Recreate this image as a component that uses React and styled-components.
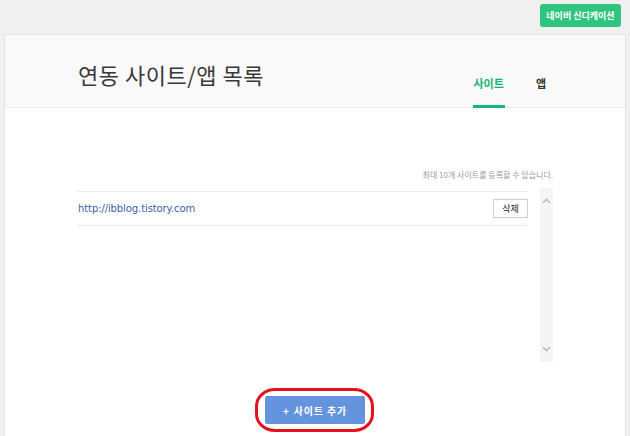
import React from "react";
import styled, { createGlobalStyle } from "styled-components";

const Global = createGlobalStyle`
  html, body { margin: 0; padding: 0; }
  body {
    background: #f0f0f0;
    font-family: "Noto Sans CJK KR", "Noto Sans", sans-serif;
    overflow: hidden;
  }
`;

const Page = styled.div`
  width: 630px;
  height: 436px;
  display: flex;
  flex-direction: column;
`;

const TopBar = styled.div`
  height: 34px;
  display: flex;
  justify-content: flex-end;
  align-items: flex-start;
  padding: 4px 9px 0 0;
  box-sizing: border-box;
`;

const GreenButton = styled.button`
  width: 81px;
  height: 23px;
  border: 0;
  border-radius: 3px;
  background: #2fc47f;
  color: #fff;
  font-family: inherit;
  font-weight: 700;
  font-size: 9px;
  letter-spacing: 0;
  padding: 0;
  cursor: pointer;
`;

const Card = styled.div`
  flex: 1;
  margin: 0 4px 0 4px;
  border: 1px solid #e4e4e4;
  border-bottom: 0;
  background: #fff;
  display: flex;
  flex-direction: column;
`;

const Header = styled.div`
  height: 72px;
  background: #f9f9f9;
  border-bottom: 1px solid #ebebeb;
  display: flex;
  align-items: stretch;
  justify-content: space-between;
  padding: 0 0 0 73px;
`;

const Title = styled.h1`
  margin: 0;
  align-self: center;
  margin-top: 6px;
  font-size: 22px;
  font-weight: 400;
  color: #383838;
  letter-spacing: 0.5px;
`;

const Tabs = styled.div`
  display: flex;
  align-items: stretch;
  gap: 30px;
  margin-right: 78px;
`;

const Tab = styled.div`
  display: flex;
  align-items: center;
  padding-top: 25px;
  box-sizing: border-box;
  font-size: 11px;
  font-weight: 700;
  color: ${p => (p.$active ? "#14b27b" : "#333")};
  border-bottom: 3px solid ${p => (p.$active ? "#10b77c" : "transparent")};
  margin-bottom: -1px;
  padding-left: 1px;
  padding-right: 1px;
`;

const Body = styled.div`
  padding: 62px 72px 0 72px;
  display: flex;
  flex-direction: column;
`;

const Note = styled.div`
  text-align: right;
  font-size: 8px;
  color: #9a9a9a;
  letter-spacing: 0;
  line-height: 10px;
`;

const ListArea = styled.div`
  margin-top: 8px;
  display: grid;
  grid-template-columns: 451px 13px;
  justify-content: space-between;
  align-items: start;
`;

const List = styled.div`
  margin-top: 3px;
  border-top: 1px solid #ececec;
`;

const Row = styled.div`
  height: 33px;
  display: flex;
  align-items: center;
  justify-content: space-between;
  border-bottom: 1px solid #ececec;
  padding-left: 1px;
`;

const Url = styled.a`
  font-family: "DejaVu Sans", "Liberation Sans", sans-serif;
  font-size: 10px;
  color: #3d60a6;
  text-decoration: none;
  letter-spacing: -0.1px;
`;

const DeleteButton = styled.button`
  width: 35px;
  height: 19px;
  border: 1px solid #cfcfcf;
  background: #fff;
  font-family: inherit;
  font-size: 9px;
  color: #222;
  padding: 0;
`;

const Scrollbar = styled.div`
  height: 174px;
  background: #f5f5f5;
  display: flex;
  flex-direction: column;
  justify-content: space-between;
  align-items: center;
  padding: 10px 0 10px;
  box-sizing: border-box;
`;

const Footer = styled.div`
  display: flex;
  justify-content: center;
  margin-top: 34px;
`;

const AddWrap = styled.div`
  position: relative;
`;

const AddButton = styled.button`
  width: 100px;
  height: 28px;
  border: 0;
  border-radius: 2px;
  background: #6594df;
  color: #fff;
  font-family: inherit;
  font-size: 10px;
  font-weight: 700;
  letter-spacing: 0.8px;
  padding: 0;
  display: flex;
  align-items: center;
  justify-content: center;
  gap: 4px;
`;

const Highlight = styled.div`
  position: absolute;
  left: -10px;
  right: -9px;
  top: -8px;
  bottom: -8px;
  border: 3px solid #e3121c;
  border-radius: 20px / 18px;
  pointer-events: none;
`;

const Chevron = ({ up }) => (
  <svg width="9" height="6" viewBox="0 0 9 6">
    <path
      d={up ? "M1 5 L4.5 1.5 L8 5" : "M1 1 L4.5 4.5 L8 1"}
      fill="none"
      stroke="#bdbdbd"
      strokeWidth="1.6"
    />
  </svg>
);

export default function App() {
  return (
    <Page>
      <Global />
      <TopBar>
        <GreenButton>네이버 신디케이션</GreenButton>
      </TopBar>
      <Card>
        <Header>
          <Title>연동 사이트/앱 목록</Title>
          <Tabs>
            <Tab $active>사이트</Tab>
            <Tab>앱</Tab>
          </Tabs>
        </Header>
        <Body>
          <Note>최대 10개 사이트를 등록할 수 있습니다.</Note>
          <ListArea>
            <List>
              <Row>
                <Url href="#">http://ibblog.tistory.com</Url>
                <DeleteButton>삭제</DeleteButton>
              </Row>
            </List>
            <Scrollbar>
              <Chevron up />
              <Chevron />
            </Scrollbar>
          </ListArea>
          <Footer>
            <AddWrap>
              <AddButton>
                <span>+</span>
                <span>사이트 추가</span>
              </AddButton>
              <Highlight />
            </AddWrap>
          </Footer>
        </Body>
      </Card>
    </Page>
  );
}
